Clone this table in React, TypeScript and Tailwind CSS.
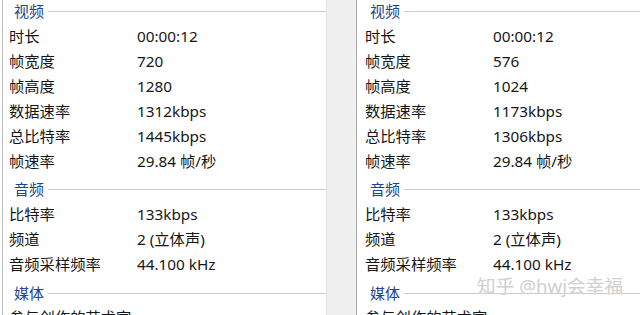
import React from 'react'

type Row = [string, string]

const font = { fontFamily: '"Noto Sans", "Noto Sans CJK SC", sans-serif' }

function Header({ title, pad }: { title: string; pad: string }) {
  return (
    <div className={`flex items-center h-[28px] ${pad}`}>
      <span className="pl-[5px] pr-[4px] text-[15px] leading-none text-[#25438a]">{title}</span>
      <div className="flex-1 h-px bg-[#c9ccd3]" />
    </div>
  )
}

function Rows({ rows }: { rows: Row[] }) {
  return (
    <div>
      {rows.map(([k, v]) => (
        <div key={k} className="flex items-center h-[25px] text-[15.3px] leading-none text-[#161616]">
          <span className="w-[128px] shrink-0 whitespace-nowrap">{k}</span>
          <span className="whitespace-nowrap">{v}</span>
        </div>
      ))}
    </div>
  )
}

function Panel({ w, h, rate, total }: { w: string; h: string; rate: string; total: string }) {
  return (
    <div>
      <div className="flex items-center h-[24px] pb-[2px]">
        <span className="pl-[5px] pr-[4px] text-[15px] leading-none text-[#25438a]">视频</span>
        <div className="flex-1 h-px bg-[#c9ccd3]" />
      </div>
      <Rows
        rows={[
          ['时长', '00:00:12'],
          ['帧宽度', w],
          ['帧高度', h],
          ['数据速率', rate],
          ['总比特率', total],
          ['帧速率', '29.84 帧/秒'],
        ]}
      />
      <Header title="音频" pad="pt-[2px]" />
      <Rows
        rows={[
          ['比特率', '133kbps'],
          ['频道', '2 (立体声)'],
          ['音频采样频率', '44.100 kHz'],
        ]}
      />
      <Header title="媒体" pad="pt-[4px]" />
      <Rows rows={[['参与创作的艺术家', '']]} />
    </div>
  )
}

export default function App() {
  return (
    <div className="relative w-[640px] h-[315px] overflow-hidden bg-white flex" style={font}>
      <div className="w-[327px] shrink-0 pl-[2px] bg-white">
        <div className="h-full border-l border-[#bcbcbc] border-r border-r-[#e2e2e2] pl-[6px]">
          <Panel w="720" h="1280" rate="1312kbps" total="1445kbps" />
        </div>
      </div>
      <div className="w-[30px] shrink-0 bg-[#f0f0f0] border-r border-[#a9a9a9]" />
      <div className="flex-1 pl-[8px] bg-white">
        <Panel w="576" h="1024" rate="1173kbps" total="1306kbps" />
      </div>
      <div
        className="absolute left-[477px] top-[277px] text-[18.7px] leading-none whitespace-nowrap text-[#d0d0d0]"
        style={{ textShadow: '0 0 1px #ffffff' }}
      >
        知乎 @hwj会幸福
      </div>
    </div>
  )
}
